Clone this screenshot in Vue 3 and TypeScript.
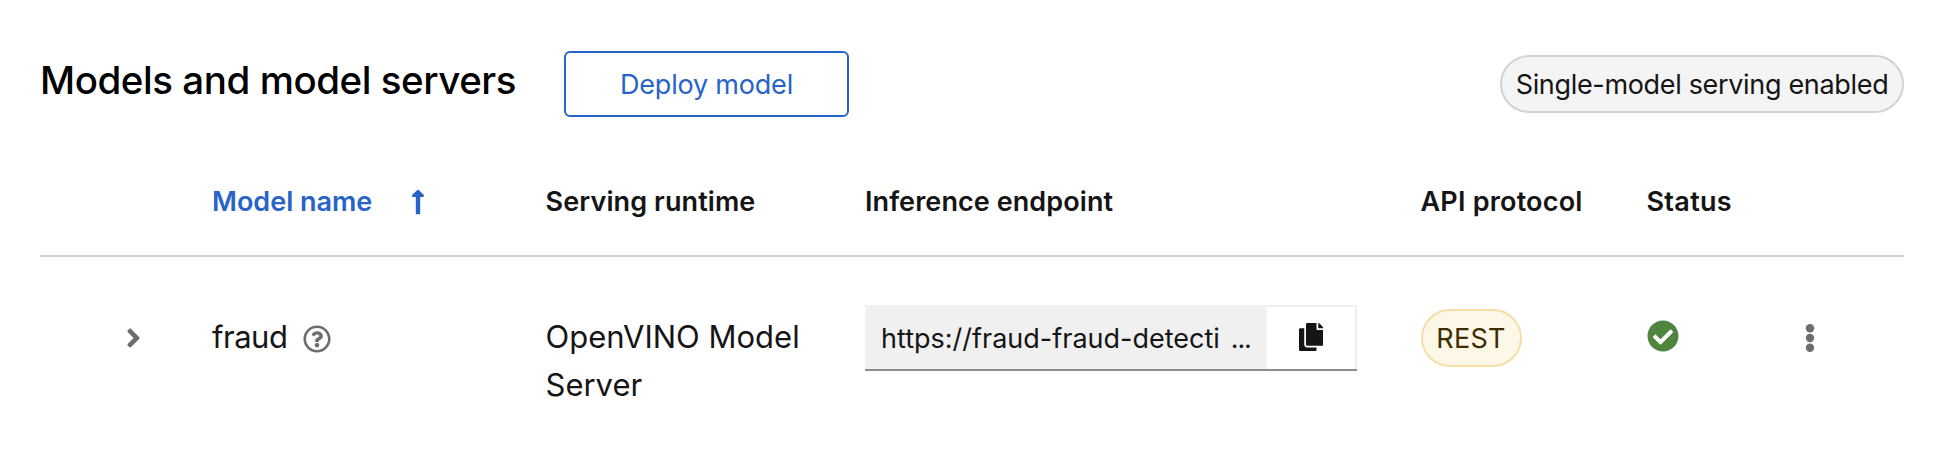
<script setup lang="ts">
interface ModelRow {
  name: string
  runtime: string
  endpointStart: string
  endpointEnd: string
  protocol: string
}

const rows: ModelRow[] = [
  {
    name: 'fraud',
    runtime: 'OpenVINO Model Server',
    endpointStart: 'https://fraud-fraud-detecti',
    endpointEnd: '...',
    protocol: 'REST',
  },
]
</script>

<template>
  <main class="page">
    <header class="toolbar">
      <h2 class="title">Models and model servers</h2>
      <button class="deploy" type="button">Deploy model</button>
      <span class="label serving">Single-model serving enabled</span>
    </header>

    <section class="table">
      <div class="row head">
        <span></span>
        <span class="th sorted">
          <span>Model name</span>
          <svg class="sort" viewBox="0 0 256 512" fill="currentColor"><path d="M88 166.059V468c0 6.627 5.373 12 12 12h56c6.627 0 12-5.373 12-12V166.059h46.059c21.382 0 32.09-25.851 16.971-40.971l-86.059-86.059c-9.373-9.373-24.569-9.373-33.941 0l-86.059 86.059c-15.119 15.119-4.411 40.971 16.971 40.971H88z" /></svg>
        </span>
        <span class="th runtime-head">Serving runtime</span>
        <span class="th endpoint-head">Inference endpoint</span>
        <span class="th protocol-head">API protocol</span>
        <span class="th status-head">Status</span>
        <span></span>
      </div>

      <div v-for="row in rows" :key="row.name" class="row body">
        <span class="toggle">
          <svg class="caret" viewBox="0 0 256 512" fill="currentColor"><path d="M224.3 273l-136 136c-9.4 9.4-24.6 9.4-33.9 0l-22.6-22.6c-9.4-9.4-9.4-24.6 0-33.9l96.4-96.4-96.4-96.4c-9.4-9.4-9.4-24.6 0-33.9L54.3 103c9.4-9.4 24.6-9.4 33.9 0l136 136c9.5 9.4 9.5 24.6.1 34z" /></svg>
        </span>
        <span class="name">
          <span class="name-text">{{ row.name }}</span>
          <svg class="help" viewBox="0 0 512 512" fill="currentColor"><path d="M256 8C119.043 8 8 119.083 8 256c0 136.997 111.043 248 248 248s248-111.003 248-248C504 119.083 392.957 8 256 8zm0 448c-110.532 0-200-89.431-200-200 0-110.495 89.472-200 200-200 110.491 0 200 89.471 200 200 0 110.53-89.431 200-200 200zm107.244-255.2c0 67.052-72.421 68.084-72.421 92.863V300c0 6.627-5.373 12-12 12h-45.647c-6.627 0-12-5.373-12-12v-8.659c0-35.745 27.1-50.034 47.579-61.516 17.561-9.845 28.324-16.541 28.324-29.579 0-17.246-21.999-28.693-39.784-28.693-23.189 0-33.894 10.977-48.942 29.969-4.057 5.12-11.46 6.071-16.666 2.124l-27.824-21.098c-5.107-3.872-6.251-11.066-2.644-16.363C184.846 131.491 214.94 112 261.794 112c49.071 0 101.45 38.304 101.45 88.8zM298 368c0 23.159-18.841 42-42 42s-42-18.841-42-42 18.841-42 42-42 42 18.841 42 42z" /></svg>
        </span>
        <span class="runtime">{{ row.runtime }}</span>
        <div class="clipboard">
          <div class="url"><span>{{ row.endpointStart }}</span><span class="dots">{{ row.endpointEnd }}</span></div>
          <button class="copy" type="button" aria-label="Copy">
            <svg viewBox="0 0 448 512" fill="currentColor"><path d="M320 448v40c0 13.255-10.745 24-24 24H24c-13.255 0-24-10.745-24-24V120c0-13.255 10.745-24 24-24h72v296c0 30.879 25.121 56 56 56h168zm0-344V0H152c-13.255 0-24 10.745-24 24v368c0 13.255 10.745 24 24 24h272c13.255 0 24-10.745 24-24V128H344c-13.2 0-24-10.8-24-24zm120.971-31.029L375.029 7.029A24 24 0 0 0 358.059 0H352v96h96v-6.059a24 24 0 0 0-7.029-16.97z" /></svg>
          </button>
        </div>
        <span class="label protocol">{{ row.protocol }}</span>
        <svg class="check" viewBox="0 0 512 512" fill="currentColor"><path d="M504 256c0 136.967-111.033 248-248 248S8 392.967 8 256 119.033 8 256 8s248 111.033 248 248zM227.314 387.314l184-184c6.248-6.248 6.248-16.379 0-22.627l-22.627-22.627c-6.248-6.249-16.379-6.249-22.628 0L216 308.118l-70.059-70.059c-6.248-6.248-16.379-6.248-22.628 0l-22.627 22.627c-6.248 6.248-6.248 16.379 0 22.627l104 104c6.249 6.249 16.379 6.249 22.628.001z" /></svg>
        <svg class="kebab" viewBox="0 0 10 30" fill="currentColor"><circle cx="5" cy="5.2" r="4.2" /><circle cx="5" cy="15" r="4.2" /><circle cx="5" cy="24.8" r="4.2" /></svg>
      </div>
    </section>
  </main>
</template>

<style>
body {
  background: #fff;
}
</style>

<style scoped>
.page {
  box-sizing: border-box;
  height: 456px;
  padding: 0 30px 0 40px;
  overflow: hidden;
  font-family: Inter, "Liberation Sans", sans-serif;
  font-size: 27px;
  color: #151515;
}
.page * {
  box-sizing: border-box;
}
svg {
  display: block;
  flex: none;
}
.toolbar {
  display: flex;
  align-items: flex-start;
  height: 149px;
  padding-top: 51px;
}
.title {
  width: 524px;
  margin: 4px 0 0;
  font-size: 38.5px;
  font-weight: 500;
  line-height: 50px;
  letter-spacing: -0.45px;
  color: #000;
  white-space: nowrap;
}
.deploy {
  width: 285px;
  height: 66px;
  padding: 0;
  border: 2px solid #2864c7;
  border-radius: 6px;
  background: #fff;
  color: #2864c7;
  font: inherit;
  letter-spacing: -0.2px;
}
.label {
  display: flex;
  align-items: center;
  justify-content: center;
  height: 58px;
  border: 2px solid #d2d2d2;
  border-radius: 29px;
  white-space: nowrap;
}
.serving {
  width: 404px;
  margin: 4px 0 0 auto;
  background: #f4f4f4;
  letter-spacing: -0.33px;
}
.row {
  display: grid;
  grid-template-columns: 172px 333.5px 319.5px 555.5px 226px 158.5px 1fr;
}
.head {
  height: 108px;
  align-items: center;
  border-bottom: 2px solid #d2d2d2;
}
.th {
  font-weight: 600;
  line-height: 40px;
  white-space: nowrap;
}
.sorted {
  display: flex;
  align-items: center;
  color: #2864c7;
}
.sorted span {
  width: 199px;
}
.sort {
  width: 14px;
  height: 28px;
}
.runtime-head {
  letter-spacing: 0.1px;
}
.endpoint-head {
  letter-spacing: 0.08px;
}
.protocol-head {
  letter-spacing: 0.2px;
}
.status-head {
  letter-spacing: 0.3px;
}
.body {
  align-items: start;
  padding-top: 48px;
}
.toggle {
  display: flex;
  height: 66px;
  align-items: center;
  padding-left: 86px;
  color: #6a6e73;
}
.caret {
  width: 15px;
  height: 30px;
}
.name {
  display: flex;
  align-items: center;
  height: 48px;
  margin-top: 8px;
  color: #6a6e73;
}
.name-text {
  width: 91px;
  font-size: 31px;
  line-height: 48px;
  letter-spacing: -0.5px;
  color: #151515;
}
.help {
  width: 28px;
  height: 28px;
  margin-top: 3px;
}
.runtime {
  width: 280px;
  margin-top: 8px;
  font-size: 31px;
  line-height: 48px;
}
.clipboard {
  display: flex;
  width: 492px;
  height: 66px;
}
.url {
  display: flex;
  align-items: center;
  width: 402px;
  padding: 3px 0 0 16px;
  border-bottom: 2px solid #8a8d90;
  background: #f0f0f0;
}
.dots {
  margin-left: 11px;
  letter-spacing: -1.2px;
}
.copy {
  display: flex;
  flex: 1;
  align-items: flex-start;
  justify-content: center;
  padding: 18px 2px 0 0;
  border: 0;
  border-bottom: 2px solid #8a8d90;
  background: #fff;
  box-shadow: inset -2px 2px #f0f0f0;
  color: #151515;
}
.copy svg {
  width: 24.5px;
  height: 28px;
}
.protocol {
  width: 101px;
  margin-top: 4px;
  border-color: #f5dfa6;
  background: #fcf7e7;
  color: #3d2c00;
  letter-spacing: 0.3px;
}
.check {
  width: 32px;
  height: 32px;
  margin-top: 15px;
  color: #50853f;
}
.kebab {
  width: 10px;
  height: 30px;
  margin-top: 18px;
  color: #6a6e73;
}
</style>
